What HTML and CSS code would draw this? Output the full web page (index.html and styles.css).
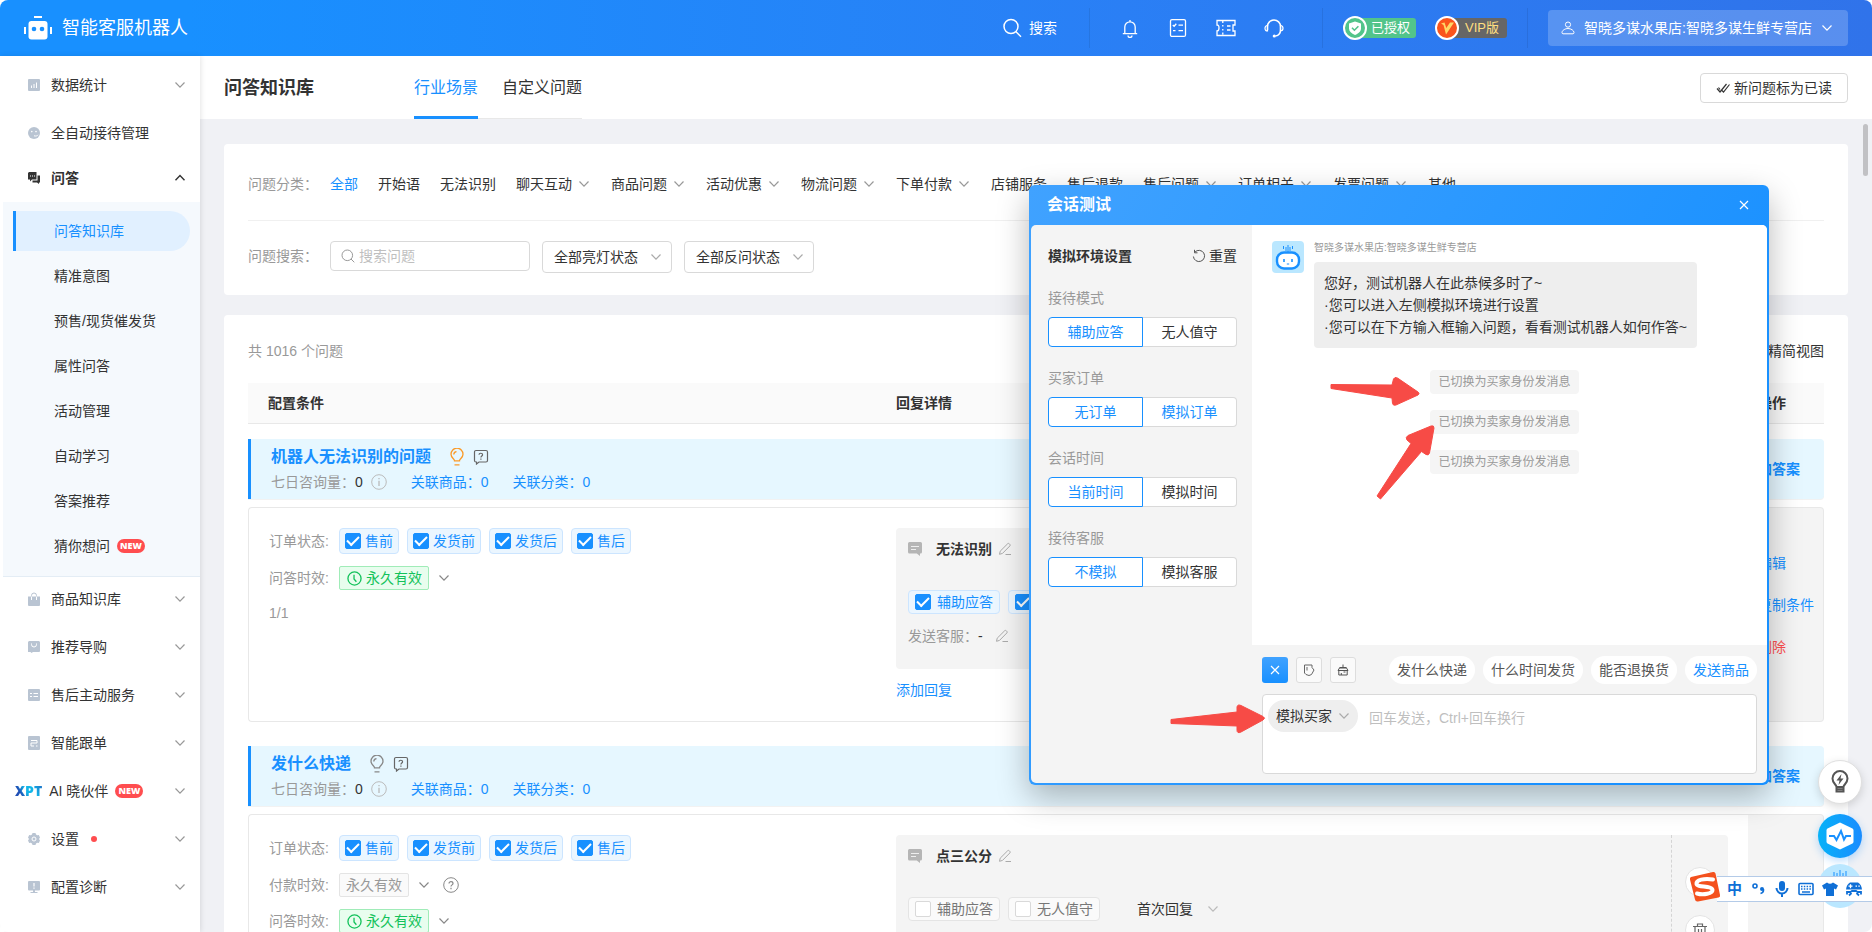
FILE: index.html
```html
<!DOCTYPE html>
<html lang="zh-CN">
<head>
<meta charset="utf-8">
<title>智能客服机器人</title>
<link rel="stylesheet" href="styles.css">
</head>
<body>
<svg class="defs" aria-hidden="true">
  <symbol id="down" viewBox="0 0 12 12"><path d="M1.500 3.500 6 8.200l4.500-4.700" fill="none" stroke="currentColor" stroke-width="1.200"/></symbol>
  <symbol id="up" viewBox="0 0 12 12"><path d="M1.500 8.300 6 3.600l4.500 4.700" fill="none" stroke="currentColor" stroke-width="1.400"/></symbol>
  <symbol id="pencil" viewBox="0 0 14 14"><path d="M1.500 12.300 2.200 9.200 9.600 1.800a1.200 1.200 0 0 1 1.700 0l.5.5a1.200 1.200 0 0 1 0 1.700L4.500 11.400zM7.500 12.500h5.500" fill="none" stroke="currentColor"/></symbol>
  <symbol id="msg" viewBox="0 0 14 14"><path d="M1.500 0h11A1.500 1.500 0 0 1 14 1.500v8.500a1.500 1.500 0 0 1-1.500 1.500H12V14L8.800 11.500H1.500A1.500 1.500 0 0 1 0 10V1.500A1.500 1.500 0 0 1 1.500 0z" fill="currentColor"/><path d="M3 4.500h8M3 7.500h5" stroke="#eee" stroke-width="1"/></symbol>
  <symbol id="bulb" viewBox="0 0 14 18"><path d="M4.500 12.800c0-2-3.500-3-3.500-6.600a6 6 0 0 1 12 0c0 3.600-3.500 4.600-3.500 6.600zM4.500 16.800h5M3.800 6.500A3 3 0 0 1 6.500 3.600" fill="none" stroke="currentColor" stroke-width="1.300"/></symbol>
  <symbol id="ask" viewBox="0 0 16 16"><path d="M3 1.500h10a1.500 1.500 0 0 1 1.500 1.500v8.500a1.500 1.500 0 0 1-1.500 1.500H6l-2.500 2V13H3a1.500 1.500 0 0 1-1.500-1.500V3A1.500 1.500 0 0 1 3 1.500z" fill="none" stroke="currentColor" stroke-width="1.200"/><path d="M6 5.800C6 3.700 9.600 3.700 9.600 5.800c0 1.300-1.700 1.200-1.700 2.700M7.900 9.600v1.200" fill="none" stroke="currentColor" stroke-width="1.200"/></symbol>
  <symbol id="info" viewBox="0 0 16 16"><circle cx="8" cy="8" r="7.300" fill="none" stroke="currentColor"/><path d="M8 6.800V12M8 4v1.300" stroke="currentColor" stroke-width="1.300"/></symbol>
  <symbol id="help" viewBox="0 0 16 16"><circle cx="8" cy="8" r="7.300" fill="none" stroke="currentColor"/><path d="M6 6.500C6 4 10 4 10 6.500 10 8 8 7.800 8 9.600M8 10.800v1.400" fill="none" stroke="currentColor" stroke-width="1.200"/></symbol>
  <symbol id="clock" viewBox="0 0 16 16"><circle cx="8" cy="8" r="7" fill="none" stroke="currentColor" stroke-width="1.400"/><path d="M7.500 4v4.500l2.500 3" fill="none" stroke="currentColor" stroke-width="1.400"/></symbol>
</svg>

<header class="topbar">
  <svg class="logo" viewBox="0 0 28 24"><path d="M10 0h8v2h-8zM0 11h2v7H0zM26 11h2v7h-2z" fill="#fff"/><rect x="4.500" y="5" width="19" height="18.500" rx="3" fill="#fff"/><circle cx="10" cy="13" r="2.300" fill="#1890ff"/><circle cx="18" cy="13" r="2.300" fill="#1890ff"/></svg>
  <span class="brand">智能客服机器人</span>
  <button class="search-btn"><svg viewBox="0 0 20 20"><circle cx="9" cy="8.500" r="7" fill="none" stroke="#fff" stroke-width="1.500"/><path d="m14 13.800 5 5" stroke="#fff" stroke-width="1.500"/></svg>搜索</button>
  <span class="divider"></span>
  <div class="tools">
    <button aria-label="通知"><svg viewBox="0 0 20 20"><path d="M10 2v1.500M4.800 15.500V9a5.200 5.200 0 0 1 10.400 0v6.500M2.800 15.600h14.400M8 17.500a2 2 0 0 0 4 0" fill="none" stroke="#fff" stroke-width="1.300"/></svg></button>
    <button aria-label="清单"><svg viewBox="0 0 20 20"><rect x="2.500" y="1.600" width="15" height="16.800" rx="1.500" fill="none" stroke="#fff" stroke-width="1.300"/><path d="m4.800 7 1.300 1.300 2.200-2.500M10.500 7.200h4.500M5 12.600h2.500M10.500 12.600h4.500" fill="none" stroke="#fff" stroke-width="1.300"/></svg></button>
    <button aria-label="卡券"><svg viewBox="0 0 20 20"><path d="M1 2.500h18v4.500h-2v6h2v4.500H1v-4.500q2 0 2-3t-2-3zM6.800 3v2M6.800 7v1.500M6.800 11v1.500M6.800 14.500v2M11 8h3.500M11 12h3.500" fill="none" stroke="#fff" stroke-width="1.300"/></svg></button>
    <button aria-label="客服"><svg viewBox="0 0 20 20"><path d="M3.500 12V8.500a6.500 6.500 0 0 1 13 0V12c0 3.500-2 5.500-5 6" fill="none" stroke="#fff" stroke-width="1.500"/><path d="M3.500 7.500v5.500C1.800 13 1 11.900 1 10.300S1.800 7.500 3.500 7.500zM16.500 7.500v5.500c1.700 0 2.500-1.100 2.500-2.700s-.8-2.800-2.500-2.800z" fill="none" stroke="#fff" stroke-width="1.200"/><circle cx="10.300" cy="18" r="1.600" fill="#fff"/></svg></button>
  </div>
  <span class="divider after-tools"></span>
  <span class="badge auth"><svg viewBox="0 0 24 24"><circle cx="12" cy="12" r="11" fill="#52c48a" stroke="#fff" stroke-width="2"/><path d="M12 5.500 18 7.500v5c0 3-2.500 5-6 6.500-3.500-1.500-6-3.500-6-6.500v-5z" fill="#fff"/><path d="m9 11.800 2.400 2.400 4-4" fill="none" stroke="#52c48a" stroke-width="1.600"/></svg><span>已授权</span></span>
  <span class="badge vip"><svg viewBox="0 0 24 24"><circle cx="12" cy="12" r="11" fill="#fa541c" stroke="#fff" stroke-width="2"/><path d="m6 7.500 3.500-1 1.800 5.500 3.700-5.500h4L11 18.500 8.500 9z" fill="#ffd666"/></svg><span>VIP版</span></span>
  <span class="divider mid"></span>
  <button class="shop"><svg viewBox="0 0 14 14"><circle cx="7" cy="3.600" r="2.600" fill="none" stroke="#fff"/><path d="M1 11.500C1 9.500 4 7.500 7 7.500s6 2 6 4c0 .8-.3 1.300-1 1.300H2c-.7 0-1-.5-1-1.300z" fill="none" stroke="#fff"/></svg><span>智晓多谋水果店:智晓多谋生鲜专营店</span><svg viewBox="0 0 12 12"><use href="#down"/></svg></button>
</header>

<div class="frame">
  <nav class="sidebar">
    <a class="item" href="#stats"><svg class="ico" viewBox="0 0 12 12"><rect width="12" height="12" rx="1" fill="currentColor"/><path d="M3.500 9V6.500M6 9V5M8.500 9V3.500" stroke="#fff"/></svg><span>数据统计</span><svg class="chev"><use href="#down"/></svg></a>
    <a class="item" href="#auto"><svg class="ico" viewBox="0 0 12 12"><circle cx="6" cy="6" r="6" fill="currentColor"/><circle cx="3.800" cy="4.600" r=".8" fill="#fff"/><circle cx="8" cy="4.600" r=".8" fill="#fff"/><path d="M6 8.800c2 .6 3.500 0 4-1" fill="none" stroke="#fff"/></svg><span>全自动接待管理</span></a>
    <a class="item open" href="#qa"><svg class="ico" viewBox="0 0 12 12"><path d="M1 0h7.500v7.500H4L2 9.500v-2H0V1z" fill="currentColor"/><path d="M9.500 3.500H12v7h-1V12l-2-1.500H4.500v-2h5z" fill="currentColor"/><path d="M2 4h1M4 4h1M6 4h1" stroke="#fff"/></svg><span>问答</span><svg class="chev"><use href="#up"/></svg></a>
    <div class="submenu">
      <a class="active" href="#kb">问答知识库</a>
      <a href="#intent">精准意图</a>
      <a href="#presale">预售/现货催发货</a>
      <a href="#attr">属性问答</a>
      <a href="#activity">活动管理</a>
      <a href="#learn">自动学习</a>
      <a href="#answer">答案推荐</a>
      <a href="#guess">猜你想问<b class="new">NEW</b></a>
    </div>
    <a class="item" href="#goods"><svg class="ico" viewBox="0 0 12 14"><path d="M0 4.500h12V13q0 1-1 1H1q-1 0-1-1z" fill="currentColor"/><path d="M3.500 5V3.500a2.500 2.500 0 0 1 5 0V5" fill="none" stroke="currentColor"/><path d="M3.500 4.500V8M8.500 4.500V8" stroke="#fff"/></svg><span>商品知识库</span><svg class="chev"><use href="#down"/></svg></a>
    <a class="item" href="#guide"><svg class="ico" viewBox="0 0 12 12"><path d="M1 0h10l1 1v9.500l-1 .5H5L3.500 12 2.500 11H0V1z" fill="currentColor"/><path d="M3.500 2.500v1a2.500 2.500 0 0 0 5 0v-1" fill="none" stroke="#fff"/></svg><span>推荐导购</span><svg class="chev"><use href="#down"/></svg></a>
    <a class="item" href="#after"><svg class="ico" viewBox="0 0 12 12"><rect width="12" height="12" rx="1" fill="currentColor"/><path d="M2 4.500h2M5.500 4.500H10M2 7.500h2M5.500 7.500H10" stroke="#fff"/></svg><span>售后主动服务</span><svg class="chev"><use href="#down"/></svg></a>
    <a class="item" href="#follow"><svg class="ico" viewBox="0 0 12 14"><rect width="12" height="14" rx="1" fill="currentColor"/><path d="M3 4.500h6v2.500H3v3h3M8 10h1.500" fill="none" stroke="#fff"/></svg><span>智能跟单</span><svg class="chev"><use href="#down"/></svg></a>
    <a class="item xpt" href="#xpt"><b class="xpt-logo">XPT</b><span>AI 晓伙伴</span><b class="new">NEW</b><svg class="chev"><use href="#down"/></svg></a>
    <a class="item" href="#settings"><svg class="ico" viewBox="0 0 12 12"><path d="M4.500 0h3l.5 1.500 1.200.7 1.600-.3L12 4.500 11 6l1 1.500-1.200 2.600-1.600-.3-1.200.7L7.500 12h-3L4 10.500l-1.200-.7-1.600.3L0 7.500 1 6 0 4.500l1.200-2.600 1.600.3L4 1.500z" fill="currentColor"/><circle cx="6" cy="6" r="2" fill="none" stroke="#fff"/></svg><span>设置</span><i class="dot"></i><svg class="chev"><use href="#down"/></svg></a>
    <a class="item" href="#diag"><svg class="ico" viewBox="0 0 12 12"><rect y="0" width="12" height="9.500" rx="1" fill="currentColor"/><path d="M5 9h2v2h2.500v1h-7v-1H5z" fill="currentColor"/><path d="M6 2v3.500M6 6.500v1.300" stroke="#fff" stroke-width="1.200"/></svg><span>配置诊断</span><svg class="chev"><use href="#down"/></svg></a>
  </nav>

  <main class="main">
    <div class="pagehead">
      <h1>问答知识库</h1>
      <div class="tabs"><a class="on" href="#scene">行业场景</a><a href="#custom">自定义问题</a></div>
      <button class="mark"><svg viewBox="0 0 14 14"><path d="m1 7.500 3 3.500 6.500-8M6 9.500 7.500 11 13.500 3.500M2.500 6.500 4 8.500" fill="none" stroke="#333" stroke-width="1.200"/></svg>新问题标为已读</button>
    </div>

    <div class="content">
      <section class="card filters">
        <div class="cats">
          <span class="lbl">问题分类：</span>
          <a class="on" href="#c0">全部</a><a href="#c1">开始语</a><a href="#c2">无法识别</a>
          <a href="#c3">聊天互动<svg><use href="#down"/></svg></a><a href="#c4">商品问题<svg><use href="#down"/></svg></a><a href="#c5">活动优惠<svg><use href="#down"/></svg></a><a href="#c6">物流问题<svg><use href="#down"/></svg></a><a href="#c7">下单付款<svg><use href="#down"/></svg></a>
          <a href="#c8">店铺服务</a><a href="#c9">售后退款</a><a href="#c10">售后问题<svg><use href="#down"/></svg></a><a href="#c11">订单相关<svg><use href="#down"/></svg></a><a href="#c12">发票问题<svg><use href="#down"/></svg></a><a href="#c13">其他</a>
        </div>
        <div class="searchrow">
          <label class="lbl" for="q">问题搜索：</label>
          <div class="searchbox"><svg viewBox="0 0 14 14"><circle cx="6.300" cy="6.300" r="5.300" fill="none" stroke="#999"/><path d="m10 10 3.300 3.300" stroke="#999"/></svg><input id="q" type="text" placeholder="搜索问题"></div>
          <div class="pick"><select aria-label="亮灯状态"><option>全部亮灯状态</option></select><svg><use href="#down"/></svg></div>
          <div class="pick"><select aria-label="反问状态"><option>全部反问状态</option></select><svg><use href="#down"/></svg></div>
        </div>
      </section>

      <section class="card list">
        <div class="summary"><span>共 1016 个问题</span><a href="#simple">精简视图</a></div>
        <table class="qa">
          <colgroup><col class="c-cond"><col><col class="c-ops"></colgroup>
          <thead><tr><th>配置条件</th><th>回复详情</th><th class="ops-h">操作</th></tr></thead>
          <tbody>
            <tr><td class="bcell first" colspan="3">
              <div class="banner">
                <div>
                  <div class="bt"><h2>机器人无法识别的问题</h2><svg class="bulb lit"><use href="#bulb"/></svg><svg class="ask"><use href="#ask"/></svg></div>
                  <div class="bm"><span>七日咨询量：</span><span class="n">0</span><svg class="info"><use href="#info"/></svg><a href="#g1">关联商品：0</a><a href="#f1">关联分类：0</a></div>
                </div>
                <a class="add" href="#add1">添加答案</a>
              </div>
            </td></tr>
            <tr class="detail">
              <td class="cond">
                <div class="row"><span class="k">订单状态:</span><label class="tag"><input type="checkbox" checked>售前</label><label class="tag"><input type="checkbox" checked>发货前</label><label class="tag"><input type="checkbox" checked>发货后</label><label class="tag"><input type="checkbox" checked>售后</label></div>
                <div class="row"><span class="k">问答时效:</span><span class="time ok"><svg><use href="#clock"/></svg>永久有效</span><svg class="rc"><use href="#down"/></svg></div>
                <div class="row"><span class="k">1/1</span></div>
              </td>
              <td class="reply">
                <div class="rbox"><div class="rmain">
                  <div class="rt"><svg class="msg"><use href="#msg"/></svg><b>无法识别</b><svg class="pen"><use href="#pencil"/></svg></div>
                  <div class="rtags"><label class="tag wide"><input type="checkbox" checked>辅助应答</label><label class="tag wide"><input type="checkbox" checked>无人值守</label></div>
                  <div class="rs"><span>发送客服：</span><span class="dash">-</span><svg class="pen"><use href="#pencil"/></svg></div>
                </div></div>
                <a class="addreply" href="#reply">添加回复</a>
              </td>
              <td class="ops"><div class="opslist"><a href="#edit">编辑</a><a href="#copy">复制条件</a><a class="del" href="#del">删除</a></div></td>
            </tr>
            <tr><td class="bcell" colspan="3">
              <div class="banner">
                <div>
                  <div class="bt"><h2>发什么快递</h2><svg class="bulb"><use href="#bulb"/></svg><svg class="ask"><use href="#ask"/></svg></div>
                  <div class="bm"><span>七日咨询量：</span><span class="n">0</span><svg class="info"><use href="#info"/></svg><a href="#g2">关联商品：0</a><a href="#f2">关联分类：0</a></div>
                </div>
                <a class="add" href="#add2">添加答案</a>
              </div>
            </td></tr>
            <tr class="detail">
              <td class="cond">
                <div class="row"><span class="k">订单状态:</span><label class="tag"><input type="checkbox" checked>售前</label><label class="tag"><input type="checkbox" checked>发货前</label><label class="tag"><input type="checkbox" checked>发货后</label><label class="tag"><input type="checkbox" checked>售后</label></div>
                <div class="row"><span class="k">付款时效:</span><span class="time">永久有效</span><svg class="rc"><use href="#down"/></svg><svg class="help"><use href="#help"/></svg></div>
                <div class="row"><span class="k">问答时效:</span><span class="time ok"><svg><use href="#clock"/></svg>永久有效</span><svg class="rc"><use href="#down"/></svg></div>
              </td>
              <td class="reply">
                <div class="rbox"><div class="rmain">
                  <div class="rt"><svg class="msg"><use href="#msg"/></svg><b>点三公分</b><svg class="pen"><use href="#pencil"/></svg></div>
                  <div class="rtags"><label class="tag wide off"><input type="checkbox">辅助应答</label><label class="tag wide off"><input type="checkbox">无人值守</label><span class="when">首次回复</span><svg class="whenc"><use href="#down"/></svg></div>
                </div>
                <div class="rside"><button aria-label="编辑"><svg><use href="#pencil"/></svg></button><button aria-label="删除"><svg viewBox="0 0 14 14"><path d="M0 3.500h14M4.500 3V1h5v2M2 3.500V14h10V3.500M5.500 6v5.500M8.500 6v5.500" fill="none" stroke="#666" stroke-width="1.200"/></svg></button></div>
                </div>
              </td>
              <td class="ops"></td>
            </tr>
          </tbody>
        </table>
      </section>
    </div>
    <span class="thumb"></span>
  </main>
</div>

<section class="dialog" role="dialog" aria-label="会话测试">
  <div class="dhead"><h2>会话测试</h2><button aria-label="关闭"><svg viewBox="0 0 10 10"><path d="m1 1 8 8M9 1 1 9" stroke="#fff" stroke-width="1.200"/></svg></button></div>
  <div class="dbody">
    <form class="env">
      <div class="envh"><b>模拟环境设置</b><button type="button"><svg viewBox="0 0 14 14"><path d="M3 3a5.600 5.600 0 1 1-1.600 4.500M2.500.800v3h3" fill="none" stroke="#555"/></svg>重置</button></div>
      <fieldset><legend>接待模式</legend><div class="seg"><label><input type="radio" name="m" checked>辅助应答</label><label><input type="radio" name="m">无人值守</label></div></fieldset>
      <fieldset><legend>买家订单</legend><div class="seg"><label><input type="radio" name="o" checked>无订单</label><label class="link"><input type="radio" name="o">模拟订单</label></div></fieldset>
      <fieldset><legend>会话时间</legend><div class="seg"><label><input type="radio" name="t" checked>当前时间</label><label><input type="radio" name="t">模拟时间</label></div></fieldset>
      <fieldset><legend>接待客服</legend><div class="seg"><label><input type="radio" name="s" checked>不模拟</label><label><input type="radio" name="s">模拟客服</label></div></fieldset>
    </form>
    <div class="chat">
      <div class="msgs">
        <div class="bot">
          <svg class="avatar" viewBox="0 0 32 32"><rect width="32" height="32" rx="4" fill="#bae7ff"/><path d="M11.500 5v3M14 6v4M16 4v7M18 6v4M20.500 5v3" stroke="#1890ff"/><rect x="5" y="11.500" width="22" height="16" rx="7" fill="#fff" stroke="#1890ff" stroke-width="2.400"/><path d="M12 18v3M20 18v3" stroke="#1890ff" stroke-width="1.600"/><path d="M14.800 23h2.400" stroke="#1890ff"/></svg>
          <div><div class="who">智晓多谋水果店:智晓多谋生鲜专营店</div>
          <p class="bubble">您好，测试机器人在此恭候多时了~<br>·您可以进入左侧模拟环境进行设置<br>·您可以在下方输入框输入问题，看看测试机器人如何作答~</p></div>
        </div>
        <span class="note">已切换为买家身份发消息</span>
        <span class="note">已切换为卖家身份发消息</span>
        <span class="note">已切换为买家身份发消息</span>
      </div>
      <div class="compose">
        <div class="bar">
          <button class="sq blue" aria-label="收起"><svg viewBox="0 0 12 12"><path d="m2 2 8 8M10 2l-8 8" stroke="#fff" stroke-width="1.200"/></svg></button>
          <button class="sq" aria-label="标签"><svg viewBox="0 0 12 12"><path d="M1.500 1h7.500v2.500l2 2.500-2.500 4.500L6 11.500l-3-1L1.500 9zM4 3v3.500" fill="none" stroke="#666"/></svg></button>
          <button class="sq" aria-label="清空"><svg viewBox="0 0 12 12"><path d="M6 .5v3M2.500 3.500h7M1 6.500 2.500 4h7L11 6.500zM1.800 6.500v4.500h8.400V6.500M4.300 9v2M6.500 8h2" fill="none" stroke="#555"/></svg></button>
          <div class="quick"><button>发什么快递</button><button>什么时间发货</button><button>能否退换货</button><button class="send">发送商品</button></div>
        </div>
        <div class="inputbox"><div class="role"><select aria-label="身份"><option>模拟买家</option></select><svg><use href="#down"/></svg></div><textarea aria-label="消息" placeholder="回车发送，Ctrl+回车换行"></textarea></div>
      </div>
    </div>
  </div>
  <svg class="arrows" viewBox="0 0 740 600" fill="#f74b46" stroke="#f74b46" stroke-width="1" stroke-linejoin="round">
    <path d="M302 199.500 363 200l1.500-6q1-2.500 4-1l20.500 14q2 1.500 0 3l-22 10q-3 1-3.500-1.500L363 213l-61-9.500z"/>
    <path d="M348 311 382 258.500l-4-3.500q-2-2.500 1-4.500l23-9.500q3-1 3 2l-4.500 25q-1 3-3.500 1.500l-4.500-3L351.500 314z"/>
    <path d="M142 534.500 208 527v-5q.500-3 4-1.500l22 11q3 1.500 0 3.500l-22 12q-4 2-4-2v-4l-66-2.500z"/>
  </svg>
</section>

<div class="floats">
  <button class="fl white" aria-label="帮助"><svg viewBox="0 0 24 24"><path d="M8.500 17c0-2.500-4-3.500-4-8.500a7.500 7.500 0 0 1 15 0c0 5-4 6-4 8.500zM8.500 17v4.500h7V17M9 19.300h6" fill="none" stroke="#555" stroke-width="2"/><path d="M13.500 4 8.500 10.500h3L10.500 15l5-6.500h-3z" fill="#555"/></svg></button>
  <button class="fl pulse" aria-label="诊断"><svg viewBox="0 0 28 28"><path d="M14 .5 26.500 6.500q1 .5 1 2v11q0 1.500-1 2L14 27.500 1.500 21.500q-1-.5-1-2v-11q0-1.500 1-2z" fill="#fff"/><path d="M3 14h5l2.500 4L15 9l3 8.500 2-3.500h5" fill="none" stroke="#1890ff" stroke-width="2"/></svg></button>
  <button class="fl pale" aria-label="机器人"><svg viewBox="0 0 44 44"><path d="M16 8v5M19 9v8M22 6v10M25 9v6M28 7v6" stroke="#1890ff"/></svg></button>
</div>

<div class="ime">
  <svg class="slogo" viewBox="0 0 32 32"><path d="m2 6 22-5q2-.5 2.500 1.500L31 24q.500 2-1.500 2.500L9 30.500q-2.500.500-3-2L1 8.500Q.500 6.500 2 6z" fill="#f4511e"/><path d="M24 8.500C15 7 7 9 7.500 13c.5 3.500 16 1.500 16 6 0 3.500-9 5.500-15.500 3.500" fill="none" stroke="#fff" stroke-width="4" stroke-linecap="round"/></svg>
  <b>中</b>
  <svg viewBox="0 0 16 16"><circle cx="5" cy="5" r="2" fill="none" stroke="#0f6fd6" stroke-width="1.600"/><circle cx="12" cy="8" r="2" fill="#0f6fd6"/><path d="M13.500 8q.500 3.500-3 4.500" fill="none" stroke="#0f6fd6" stroke-width="1.500"/></svg>
  <svg viewBox="0 0 16 16"><rect x="5" y="0" width="6" height="10" rx="3" fill="#0f6fd6"/><path d="M2.500 7a5.500 5.500 0 0 0 11 0M8 12.500V16" fill="none" stroke="#0f6fd6" stroke-width="2"/></svg>
  <svg viewBox="0 0 16 16"><rect x="1" y="2.500" width="14" height="11" rx="1" fill="none" stroke="#0f6fd6" stroke-width="1.600"/><path d="M3 5.500h10M3 8h10" stroke="#0f6fd6" stroke-width="1.500" stroke-dasharray="1.500 1.300"/><path d="M4 11h8" stroke="#0f6fd6" stroke-width="1.500"/></svg>
  <svg viewBox="0 0 16 16"><path d="M5 1.500q3 2.500 6 0L16 4.500 14 8.500l-2-1V15H4V7.500l-2 1-2-4z" fill="#0f6fd6"/></svg>
  <svg viewBox="0 0 16 16"><path d="M4 1.500h8Q15.500 3.500 16 8.500H0Q.500 3.500 4 1.500z" fill="#0f6fd6"/><path d="M2.500 5.200h4M4.500 3.200v4M9.500 5.200H11M12.300 5.200h1.500" stroke="#fff" stroke-width="1.300"/><path d="M1 13.500V11h3.500l1.500-1h4l1.500 1H15v2.500M3 14.500 5.500 12M13 14.500 10.500 12" fill="none" stroke="#0f6fd6" stroke-width="1.800"/></svg>
</div>
</body>
</html>
```
FILE: styles.css
```css
* { box-sizing: border-box; }
html { background: #fff; }
body {
  margin: 0; height: 100vh; overflow: hidden; display: flex; flex-direction: column;
  border-radius: 8px; background: #fff; color: #333;
  font: 14px/22px "Liberation Sans", "Noto Sans CJK SC", sans-serif;
}
button, input, select, textarea { font: inherit; color: inherit; margin: 0; padding: 0; border: 0; background: none; }
a { color: inherit; text-decoration: none; }
h1, h2, p, fieldset, legend { margin: 0; padding: 0; border: 0; }
svg { display: block; flex: none; }
select { appearance: none; outline: 0; }
.defs { position: absolute; width: 0; height: 0; }

.topbar { flex: none; height: 56px; padding: 0 24px; display: flex; align-items: center; color: #fff; background: linear-gradient(90deg, #1890ff 10%, #2a7ff5 60%, #3073ea); }
.logo { width: 28px; height: 24px; }
.brand { margin-left: 10px; font-size: 18px; }
.search-btn { margin-left: auto; display: flex; align-items: center; gap: 7px; }
.search-btn svg { width: 20px; height: 20px; }
.divider { width: 1px; height: 40px; background: rgba(0, 0, 0, .08); margin: 0 30px 0 32px; }
.after-tools { margin: 0 20px 0 38px; }
.mid { margin: 0 20px; }
.tools { display: flex; gap: 28px; }
.tools svg { width: 20px; height: 20px; }
.badge { display: flex; align-items: center; font-size: 13px; }
.badge svg { width: 24px; height: 24px; margin-right: -12px; position: relative; }
.badge span { height: 20px; line-height: 20px; padding: 0 6px 0 16px; border-radius: 3px; background: #52c48a; }
.vip { margin-left: 19px; }
.vip span { background: #666; color: #ffdf80; padding: 0 8px 0 18px; }
.shop { height: 36px; width: 300px; padding: 0 14px 0 13px; border-radius: 4px; background: rgba(255, 255, 255, .2); display: flex; align-items: center; gap: 9px; }
.shop svg { width: 14px; height: 14px; }
.shop svg:last-child { width: 12px; height: 12px; }

.frame { flex: 1; min-height: 0; display: flex; }
.sidebar { flex: none; width: 200px; padding-top: 5px; background: #fff; box-shadow: 1px 0 5px rgba(0, 0, 0, .1); position: relative; z-index: 1; }
.item { display: flex; align-items: center; height: 48px; padding: 0 14px 0 28px; }
.ico { width: 12px; height: 14px; margin-right: 11px; color: #b9c4d2; }
.chev { width: 12px; height: 12px; margin-left: auto; color: #999; }
.open { height: 45px; padding-bottom: 3px; font-weight: bold; }
.open .ico, .open .chev { color: #333; }
.submenu { margin-left: 3px; padding: 6px 10px 5px; background: #f5f9fd; border-bottom: 1px solid #e4edf5; margin-bottom: -2px; }
.submenu a { display: flex; align-items: center; height: 40px; margin: 5px 0; padding-left: 41px; }
.submenu a:first-child { margin-top: 3px; }
.submenu .active { color: #1890ff; background: #e1f0ff; border-left: 3px solid #1890ff; padding-left: 38px; border-radius: 0 20px 20px 0; }
.new { margin-left: 7px; width: 28px; height: 14px; border-radius: 7px; background: #ff4d4f; color: #fff; font: 800 9px/14px "Open Sans", sans-serif; text-align: center; }
.xpt { padding-left: 15px; }
.xpt-logo { margin-right: 7px; font: 800 14px/20px "Open Sans", sans-serif; color: transparent; background: linear-gradient(60deg, #1f4fb5 25%, #12b6e8 45%, #12b6e8 65%, #1f5fc0); background-clip: text; }
.dot { width: 6px; height: 6px; border-radius: 50%; background: #ff4d4f; margin-left: 12px; }

.main { flex: 1; min-width: 0; display: flex; flex-direction: column; background: #f0f1f5; position: relative; }
.pagehead { flex: none; height: 63px; padding: 0 24px; background: #fff; display: flex; align-items: center; }
.pagehead h1 { font-size: 18px; }
.tabs { align-self: stretch; margin-left: 100px; display: flex; gap: 24px; font-size: 16px; line-height: 64px; box-shadow: inset 0 -1px #e8e8e8; }
.tabs .on { color: #1890ff; box-shadow: inset 0 -3px #1890ff; }
.mark { margin-left: auto; height: 30px; padding: 0 15px; border: 1px solid #d9d9d9; border-radius: 4px; display: flex; align-items: center; gap: 4px; }
.mark svg { width: 14px; height: 14px; }
.thumb { position: absolute; right: 4px; top: 68px; width: 5px; height: 52px; border-radius: 3px; background: #c1c1c4; }
.content { flex: 1; min-height: 0; overflow: hidden; padding: 25px 24px 0; }
.card { background: #fff; border-radius: 4px; padding: 0 24px; }
.cats { display: flex; align-items: center; gap: 20px; height: 77px; padding-top: 4px; border-bottom: 1px solid #f0f0f0; white-space: nowrap; }
.cats a { display: flex; align-items: center; }
.cats svg { width: 12px; height: 12px; margin: 0 1px 0 6px; color: #999; }
.lbl { width: 70px; color: #999; }
.cats .lbl { margin-right: -8px; }
.cats .on { color: #1890ff; }
.searchrow { display: flex; gap: 12px; padding: 20px 0 22px; }
.searchrow .lbl { line-height: 30px; }
.searchbox { width: 200px; height: 30px; padding: 0 10px; border: 1px solid #d9d9d9; border-radius: 4px; display: flex; align-items: center; gap: 4px; }
.searchbox svg { width: 14px; height: 14px; }
.searchbox input { width: 100%; outline: 0; }
::placeholder { color: #bfbfbf; opacity: 1; }
.pick { width: 130px; height: 32px; border: 1px solid #d9d9d9; border-radius: 4px; display: flex; align-items: center; padding: 0 9px 0 11px; }
.pick select { flex: 1; min-width: 0; }
.pick svg { width: 12px; height: 12px; color: #aaa; }

.list { margin-top: 20px; padding-top: 25px; }
.summary { display: flex; justify-content: space-between; color: #999; margin-bottom: 21px; }
.summary a { color: #333; }
.qa { width: 100%; table-layout: fixed; border-spacing: 0; }
.c-cond { width: 628px; }
.c-ops { width: 76px; }
.qa th { height: 41px; padding: 0 20px; text-align: left; background: #fafafa; border-bottom: 1px solid #e8e8e8; }
.qa .ops-h { padding: 0 10px; }
.qa td { padding: 0; vertical-align: top; }
.qa .bcell { padding: 24px 0 8px; }
.qa .first { padding-top: 15px; }
.banner { display: flex; align-items: center; justify-content: space-between; height: 60px; padding: 0 24px 0 20px; border-left: 3px solid #1890ff; border-radius: 0 4px 4px 0; background: #e6f7ff; box-shadow: 0 1px #f2f2f2; color: #999; }
.bt { display: flex; align-items: center; height: 26px; }
.bt h2 { font-size: 16px; color: #1890ff; margin-right: 19px; }
.bulb { width: 14px; height: 18px; color: #888; }
.lit { color: #fa9a28; }
.ask { width: 16px; height: 16px; margin-left: 9px; color: #666; }
.bm { display: flex; align-items: center; height: 24px; }
.bm .n { color: #333; }
.bm a { color: #1890ff; margin-left: 24px; }
.info { width: 16px; height: 16px; margin-left: 8px; color: #bbb; }
.add { color: #1890ff; font-weight: bold; }
.detail td { border: 1px solid #e8e8e8; border-width: 1px 0; }
.detail .cond { border-left-width: 1px; border-radius: 4px 0 0 4px; padding: 20px; }
.row { display: flex; align-items: center; color: #999; margin-bottom: 12px; }
.row .k { width: 70px; }
.tag { display: flex; align-items: center; gap: 4px; height: 26px; padding: 0 5px; margin-right: 8px; border: 1px solid #cce5ff; border-radius: 4px; background: #ebf6ff; color: #1890ff; }
.wide { height: 24px; gap: 6px; padding: 0 6px; }
.off { border-color: #e4e4e4; background: #fafafa; color: #777; }
.tag input { appearance: none; width: 16px; height: 16px; border: 1px solid #d9d9d9; border-radius: 2px; background: #fff; display: grid; place-items: center; }
.tag input:checked { background: #1890ff; border-color: #1890ff; }
.tag input:checked::after { content: ""; width: 10px; height: 5px; border: solid #fff; border-width: 0 0 2px 2px; transform: rotate(-45deg); margin-top: -3px; }
.time { height: 24px; padding: 0 6px; border: 1px solid #e4e4e4; border-radius: 2px; background: #fafafa; display: flex; align-items: center; gap: 4px; }
.ok { padding: 0 6px 0 7px; border-color: #a0ecb8; background: #e8fdee; color: #13c25b; }
.time svg { width: 15px; height: 15px; }
.rc { width: 12px; height: 12px; margin-left: 9px; color: #888; }
.help { width: 16px; height: 16px; margin-left: 13px; color: #888; }
.reply { height: 215px; }
.qa .reply { padding: 20px; }
.rbox { display: flex; background: #f4f4f4; border-radius: 4px; height: 141px; }
.rmain { flex: 1; padding: 10px 12px; }
.rt { display: flex; align-items: center; height: 22px; margin-bottom: 30px; }
.msg { width: 14px; height: 14px; color: #b5b5b5; margin-right: 14px; }
.pen { width: 14px; height: 14px; margin-left: 6px; color: #aaa; }
.rtags { display: flex; align-items: center; }
.when { margin-left: 29px; color: #333; }
.whenc { width: 12px; height: 12px; margin-left: 14px; color: #bbb; }
.rs { display: flex; align-items: center; margin-top: 11px; color: #999; }
.rs .dash { color: #333; margin-right: 6px; }
.rside { width: 57px; border-left: 1px dashed #d4d4d4; padding-top: 32px; display: flex; flex-direction: column; align-items: center; gap: 18px; }
.rside button { flex: none; width: 30px; height: 30px; border: 1px solid #e4e4e4; border-radius: 50%; background: #fff; display: grid; place-items: center; color: #888; }
.rside svg { width: 14px; height: 14px; }
.addreply { display: block; margin-top: 10px; color: #1890ff; }
.detail .ops { background: #f4f4f4; border-right-width: 1px; border-radius: 0 4px 4px 0; vertical-align: middle; }
.opslist { display: grid; gap: 20px; padding: 0 10px; margin-top: -20px; color: #1890ff; white-space: nowrap; }
.del { color: #ff4d4f; }

.dialog { position: absolute; z-index: 2; right: 103px; top: 185px; width: 740px; border-radius: 6px; padding: 0 2px 2px; background: linear-gradient(120deg, #40a2ff, #1890ff 80%); box-shadow: 0 12px 32px rgba(0, 0, 0, .28); }
.dhead { height: 40px; padding: 0 18px 0 16px; display: flex; align-items: center; justify-content: space-between; color: #fff; }
.dhead h2 { font-size: 16px; }
.dhead svg { width: 10px; height: 10px; }
.dbody { display: flex; height: 558px; background: #f4f4f4; border-radius: 5px; overflow: hidden; }
.env { width: 221px; padding: 20px 15px 0 17px; }
.envh { display: flex; justify-content: space-between; margin-bottom: 20px; }
.envh button { display: flex; align-items: center; gap: 3px; }
.envh svg { width: 14px; height: 14px; }
.env fieldset { margin-bottom: 20px; }
.env legend { color: #999; margin-bottom: 8px; }
.seg { display: flex; }
.seg label { flex: 1; position: relative; height: 30px; line-height: 28px; text-align: center; border: 1px solid #d9d9d9; background: #fff; }
.seg label:first-child { border-radius: 4px 0 0 4px; }
.seg label:last-child { border-radius: 0 4px 4px 0; border-left: 0; }
.seg label:has(:checked) { border-color: #1890ff; color: #1890ff; }
.seg .link { color: #1890ff; }
.seg input { position: absolute; opacity: 0; }
.chat { flex: 1; min-width: 0; display: flex; flex-direction: column; }
.msgs { flex: 1; background: #fff; padding: 16px 30px 0 20px; display: flex; flex-direction: column; align-items: center; gap: 16px; }
.bot { align-self: stretch; display: flex; gap: 10px; margin-bottom: 6px; }
.avatar { width: 32px; height: 32px; }
.who { font-size: 10px; line-height: 14px; color: #999; }
.bubble { margin-top: 7px; padding: 10px; background: #eee; border-radius: 4px; white-space: nowrap; }
.note { height: 24px; line-height: 24px; padding: 0 8px; border-radius: 4px; background: #f5f5f5; color: #999; font-size: 12px; }
.compose { padding: 11px 10px 9px; }
.bar { display: flex; align-items: center; gap: 8px; }
.sq { width: 26px; height: 26px; border: 1px solid #ddd; border-radius: 3px; background: #fafafa; display: grid; place-items: center; }
.sq svg { width: 12px; height: 12px; }
.blue { border: 0; background: linear-gradient(#40a2ff, #1890ff); }
.quick { margin-left: auto; display: flex; gap: 8px; color: #555; }
.quick button { height: 28px; padding: 0 8px; border-radius: 14px; background: #fff; }
.quick .send { color: #1890ff; }
.inputbox { margin-top: 10px; height: 80px; padding: 5px; border: 1px solid #d9d9d9; border-radius: 4px; background: #fff; display: flex; align-items: flex-start; }
.role { width: 90px; height: 32px; border-radius: 16px; background: #eee; padding: 0 8px; display: flex; align-items: center; }
.role select { flex: 1; min-width: 0; }
.role svg { width: 12px; height: 12px; color: #aaa; }
.inputbox textarea { flex: 1; height: 60px; padding: 7px 11px; resize: none; outline: 0; }
.arrows { position: absolute; left: 0; top: 0; width: 740px; height: 600px; pointer-events: none; }

.floats { position: absolute; z-index: 3; right: 10px; bottom: 24px; display: grid; justify-items: center; gap: 10px; }
.fl { width: 44px; height: 44px; border-radius: 50%; display: grid; place-items: center; }
.white { background: #fff; border: 1px solid #e0e0e0; box-shadow: 0 3px 10px rgba(0, 0, 0, .15); }
.white svg { width: 24px; height: 24px; }
.pulse { background: linear-gradient(90deg, #06b2f8, #1a8cff); box-shadow: 0 3px 8px rgba(24, 144, 255, .3); }
.pulse svg { width: 28px; height: 28px; }
.pale { background: #bae7ff; margin-top: -4px; }
.pale svg { width: 44px; height: 44px; }
.ime { position: absolute; z-index: 4; right: 0; bottom: 30px; height: 26px; padding: 0 10px 0 4px; display: flex; align-items: center; gap: 8px; background: #fff; border: 1px solid #b4cbe8; border-width: 1px 0; }
.ime svg { width: 16px; height: 16px; }
.ime .slogo { width: 32px; height: 32px; margin: -4px -2px 0 -32px; }
.ime b { color: #0f6fd6; font-size: 15px; }
```
